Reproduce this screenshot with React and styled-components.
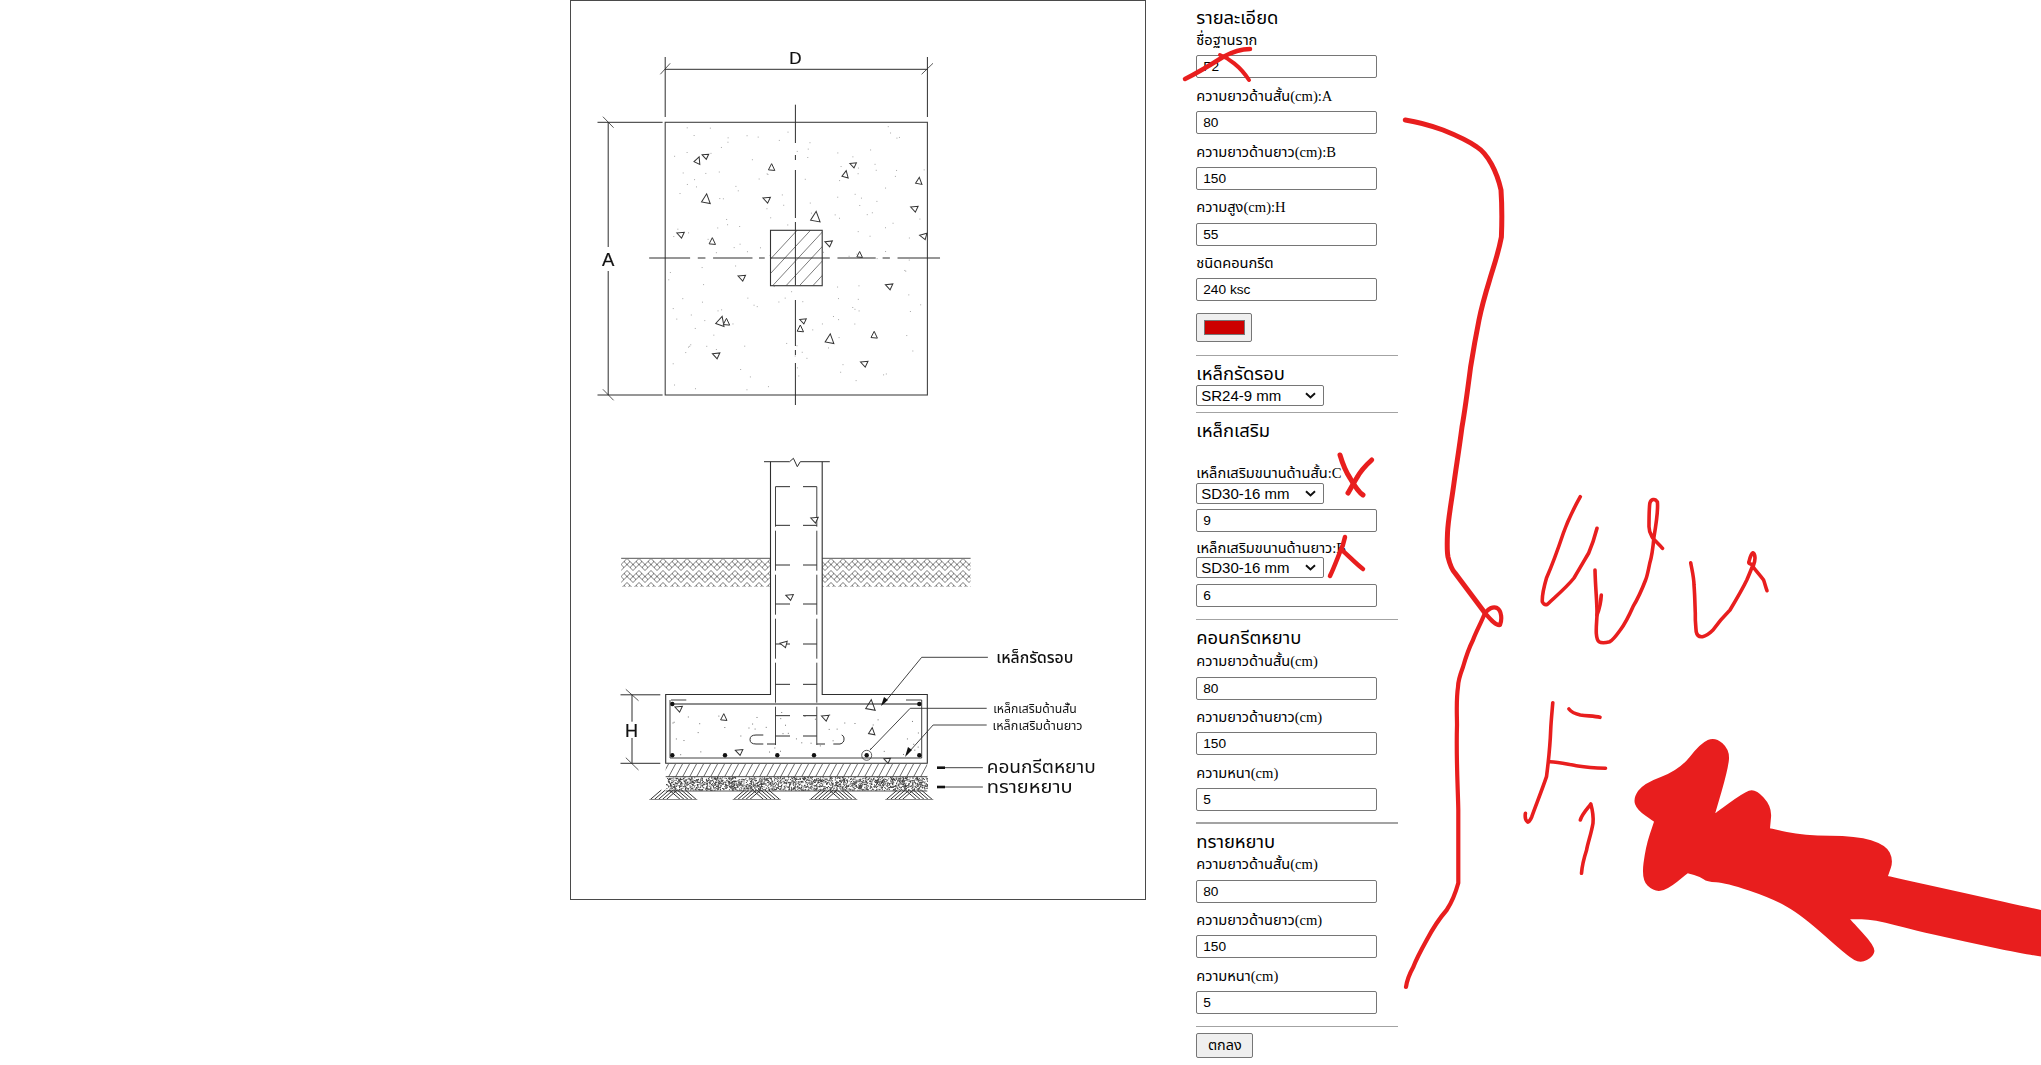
import React from "react";
import styled, { createGlobalStyle } from "styled-components";

const Global = createGlobalStyle`
  html, body { margin: 0; padding: 0; background: #fff; overflow: hidden; }
  #root { width: 2041px; height: 1065px; }
`;

const Page = styled.div`
  position: relative;
  display: flex;
  align-items: flex-start;
  width: 2041px;
  height: 1065px;
  padding-left: 570px;
  box-sizing: border-box;
  overflow: hidden;
`;

const Figure = styled.div`
  flex: none;
  box-sizing: border-box;
  width: 576px;
  height: 900px;
  border: 1px solid #4a4a4a;
`;

const FigureArt = styled.svg`
  display: block;
  width: 574px;
  height: 898px;
  filter: blur(0.25px);
`;

const FormColumn = styled.form`
  flex: none;
  display: flex;
  flex-direction: column;
  align-items: flex-start;
  width: 202px;
  margin-left: 50.25px;
  padding-top: 7px;
  color: #000;
  font-family: "Liberation Serif", "Noto Sans Thai", "Noto Sans", serif;
`;

const Heading = styled.h3`
  margin: 0 0 ${(p) => p.$after ?? 1.5}px;
  height: 22px;
  line-height: 22px;
  font-size: 18.4px;
  font-weight: 400;
  font-family: "Liberation Sans", "Noto Sans Thai", "Noto Sans", sans-serif;
  white-space: nowrap;
`;

const Label = styled.label`
  display: block;
  height: 20px;
  line-height: 20px;
  font-size: 14.6px;
  white-space: nowrap;
`;

const TextInput = styled.input`
  display: block;
  box-sizing: border-box;
  width: 181px;
  height: 23px;
  margin: ${(p) => p.$top ?? 5.25}px 0 ${(p) => p.$bottom ?? 7.5}px;
  padding: 0 6px;
  border: 1px solid #767676;
  border-radius: 2px;
  background: #fff;
  color: #000;
  font-family: "Liberation Sans", sans-serif;
  font-size: 13.7px;
`;

const chevron = encodeURIComponent(
  '<svg xmlns="http://www.w3.org/2000/svg" width="11" height="7" viewBox="0 0 11 7"><path d="M1 1.2 L5.5 5.4 L10 1.2" fill="none" stroke="#111" stroke-width="2"/></svg>'
);

const Dropdown = styled.select`
  display: block;
  appearance: none;
  box-sizing: border-box;
  width: 128px;
  height: 20.5px;
  margin: ${(p) => p.$top ?? 0}px 0 0;
  padding: 0 0 0 4px;
  border: 1px solid #767676;
  border-radius: 2px;
  background: #fff url("data:image/svg+xml,${chevron}") no-repeat right 7px center;
  color: #000;
  font-family: "Liberation Sans", sans-serif;
  font-size: 15px;
`;

const SwatchButton = styled.button`
  display: flex;
  align-items: center;
  justify-content: center;
  box-sizing: border-box;
  width: 56px;
  height: 29.5px;
  margin-top: 4px;
  padding: 0;
  border: 1px solid #767676;
  border-radius: 2px;
  background: #efefef;
`;

const Swatch = styled.span`
  display: block;
  box-sizing: border-box;
  width: 41px;
  height: 14.5px;
  border: 1px solid #777;
  background: #cc0000;
`;

const Rule = styled.hr`
  align-self: stretch;
  height: 1.5px;
  margin: ${(p) => p.$top}px 0 ${(p) => p.$bottom ?? 7}px;
  border: 0;
  background: #a3a3a3;
`;

const SubmitButton = styled.button`
  box-sizing: border-box;
  width: 57px;
  height: 25px;
  padding: 0;
  border: 1px solid #767676;
  border-radius: 2px;
  background: #efefef;
  color: #000;
  font-family: "Liberation Sans", "Noto Sans Thai", "Noto Sans", sans-serif;
  font-size: 14.4px;
`;

const Overlay = styled.svg`
  position: absolute;
  left: 0;
  top: 0;
  width: 2041px;
  height: 1065px;
  pointer-events: none;
`;

const INK = "#2e2e2e";
const px = (x) => 560 + x / 2.613;
const py1 = (y) => y / 3;
const py2 = (y) => 440 + y / 3;

const seeded = (seed) => {
  let s = seed;
  return () => {
    s = (s * 16807) % 2147483647;
    return s / 2147483647;
  };
};

const Line = ({ pts, w = 1, c = INK, dash }) => (
  <polyline points={pts.map((p) => p.join(",")).join(" ")} fill="none" stroke={c} strokeWidth={w} strokeDasharray={dash} />
);

const Tri = ({ x, y, s = 4.5, r = 0 }) => (
  <polygon
    points={`0,${-s} ${s * 0.8},${s * 0.7} ${-s * 0.8},${s * 0.55}`}
    transform={`translate(${x} ${y}) rotate(${r})`}
    fill="#fff"
    stroke="#333"
    strokeWidth="1"
  />
);

const planTris = [
  [360, 482, 4, 20], [380, 468, 3.5, -70], [553, 503, 4, 0], [766, 494, 3.5, -70], [746, 524, 4, 10],
  [938, 544, 4, 5], [382, 598, 5.5, 5], [540, 598, 4, -70], [926, 625, 4, -70], [668, 652, 6, 5],
  [315, 703, 4, -70], [398, 725, 4, 0], [702, 729, 4, -70], [950, 708, 4, -80], [783, 765, 3.5, 0],
  [475, 832, 4, -70], [860, 858, 4, -70], [420, 965, 5.5, 15], [435, 967, 4, 0], [635, 962, 3.5, -70],
  [628, 987, 4, 0], [705, 1018, 5.5, 5], [821, 1006, 4, 0], [408, 1065, 4, -70], [795, 1090, 4, -70],
];

const elevTris = [
  [665, 238, 4, -70], [600, 470, 4, -70], [585, 612, 4, -80], [812, 797, 6, 5], [310, 805, 4, -70],
  [428, 833, 4, 0], [693, 832, 4, -70], [815, 875, 4, 5], [468, 935, 4, -70], [855, 960, 3.5, -70],
];

const randPlan = seeded(7771);
const planDots = Array.from({ length: 170 }, () => [667 + randPlan() * 258, 124 + randPlan() * 269]);
const randFoot = seeded(4242);
const footDots = Array.from({ length: 50 }, () => [672 + randFoot() * 246, 707 + randFoot() * 48]);
const randSand = seeded(9119);
const sandDots = Array.from({ length: 2000 }, () => [666 + randSand() * 261, 777 + randSand() * 13]);

const segs = (list, f) => list.map(([a, b]) => f(a, b));

const PlanView = () => (
  <g>
    <rect x="665.2" y="122.3" width="262.2" height="272.7" fill="none" stroke="#444" strokeWidth="1.1" />
    {planDots.map(([x, y], i) => <rect key={i} x={x} y={y} width="1" height="1" fill="#a8a8a8" />)}
    {planTris.map(([x, y, s, r], i) => <Tri key={i} x={px(x)} y={py1(y)} s={s} r={r} />)}
    <Line pts={[[665.2, 69.3], [927.4, 69.3]]} />
    <Line pts={[[665.2, 57], [665.2, 117]]} />
    <Line pts={[[927.4, 57], [927.4, 117]]} />
    <Line pts={[[660.3, 74.3], [670.2, 63.3]]} w={0.8} />
    <Line pts={[[921.6, 74.3], [933, 63.3]]} w={0.8} />
    <text x="795.4" y="64" textAnchor="middle" fontFamily="Liberation Sans" fontSize="17" fill="#111" stroke="#111" strokeWidth="0.2">D</text>
    <Line pts={[[597.5, 122.3], [662.6, 122.3]]} />
    <Line pts={[[597.5, 395], [662.6, 395]]} />
    <Line pts={[[608.2, 122.3], [608.2, 247]]} />
    <Line pts={[[608.2, 271], [608.2, 395]]} />
    <Line pts={[[602.9, 116.7], [613.6, 127.7]]} w={0.8} />
    <Line pts={[[602.9, 389.3], [613.6, 400.3]]} w={0.8} />
    <text x="608.2" y="266" textAnchor="middle" fontFamily="Liberation Sans" fontSize="18.5" fill="#111" stroke="#111" strokeWidth="0.2">A</text>
    <rect x="770.5" y="230.3" width="51.7" height="55.4" fill="#fff" stroke="#333" strokeWidth="1.1" />
    <clipPath id="col-clip"><rect x="770.5" y="230.3" width="51.7" height="55.4" /></clipPath>
    <g clipPath="url(#col-clip)">
      {Array.from({ length: 10 }, (_, i) => (
        <line key={i} x1={740 + i * 13.4} y1="292" x2={740 + i * 13.4 + 62} y2="225" stroke="#444" strokeWidth="0.7" />
      ))}
    </g>
    {segs([[104.7, 143], [155, 160], [170, 218], [222, 285], [300, 346], [350, 355], [363, 405]], (a, b) => (
      <Line key={a} pts={[[795.4, a], [795.4, b]]} />
    ))}
    {segs([[233, 340], [360, 380], [400, 503], [520, 535], [550, 705], [725, 825], [843, 862], [882, 993]], (a, b) => (
      <Line key={a} pts={[[px(a), 258], [px(b), 258]]} />
    ))}
  </g>
);

const ties = [140, 256, 375, 492, 612, 733, 827, 888];

const earthCenters = [673.3, 756.7, 833.3, 909.3];

const Leader = ({ pts, w = 0.9 }) => <Line pts={pts} w={w} />;

const CalloutText = ({ x, y, len, size, weight, children }) => (
  <text
    x={x}
    y={y}
    textLength={len}
    lengthAdjust="spacingAndGlyphs"
    fontFamily="Liberation Sans, Noto Sans Thai, Noto Sans, sans-serif"
    fontSize={size}
    fontWeight={weight}
    fill="#111"
  >
    {children}
  </text>
);

const ElevationView = () => (
  <g>
    <defs>
      <pattern id="soil" width="12" height="12" patternUnits="userSpaceOnUse" x="621" y="558.5">
        <path d="M0 6 L6 0 L12 6 M0 12 L6 6 L12 12 M3 3 L6 6 M9 3 L6 6 M3 9 L0 6 M9 9 L12 6" fill="none" stroke="#5a5a5a" strokeWidth="0.8" />
      </pattern>
      <pattern id="lean" width="7" height="13" patternUnits="userSpaceOnUse" x="665" y="764">
        <path d="M-3.5 13 L3.5 0 M3.5 13 L10.5 0" fill="none" stroke="#444" strokeWidth="0.8" />
      </pattern>
    </defs>
    <rect x="621.2" y="558.3" width="149.3" height="28.6" fill="url(#soil)" />
    <rect x="822.2" y="558.3" width="148.4" height="28.6" fill="url(#soil)" />
    <Line pts={[[621.2, 558.3], [770.5, 558.3]]} w={1.2} c="#777" />
    <Line pts={[[822.2, 558.3], [970.6, 558.3]]} w={1.2} c="#777" />

    <Line pts={[[764, 461.7], [789.6, 461.7], [793.4, 458.3], [797.3, 466.7], [800.3, 461.7], [829.8, 461.7]]} />
    <Line pts={[[770.5, 461.7], [770.5, 694.5], [665.7, 694.5], [665.7, 763.3], [927.3, 763.3], [927.3, 694.5], [822.2, 694.5], [822.2, 461.7]]} w={1.1} />
    <Line pts={[[775.5, 486.7], [775.5, 745]]} dash="40 4" w={0.9} />
    <Line pts={[[816.8, 486.7], [816.8, 745]]} dash="40 4" w={0.9} />
    {ties.map((y) => (
      <g key={y}>
        <Line pts={[[775.5, py2(y)], [790, py2(y)]]} />
        <Line pts={[[803, py2(y)], [816.8, py2(y)]]} />
      </g>
    ))}
    {footDots.map(([x, y], i) => <rect key={i} x={x} y={y} width="1" height="1" fill="#777" />)}
    {elevTris.map(([x, y, s, r], i) => <Tri key={i} x={px(x)} y={py2(y)} s={s} r={r} />)}

    <Line pts={[[672, 704], [919.5, 704]]} w={1.2} c="#1d1d1d" />
    <Line pts={[[670, 700], [670, 758], [921.7, 758], [921.7, 700], [906, 700]]} w={0.9} />
    <Line pts={[[671, 700], [686.3, 700]]} w={0.9} />
    {[[672.3, 704], [919.3, 704], [672.3, 755.3], [725, 755.3], [777.3, 755.3], [814, 755.3], [866.7, 755.3], [919.3, 755.3]].map(([x, y]) => (
      <circle key={x + y} cx={x} cy={y} r="2.2" fill="#111" />
    ))}
    <circle cx="866.7" cy="755.3" r="5" fill="none" stroke="#333" strokeWidth="0.8" />
    <path d="M763.3 735 L756 735 Q750 735 750 739.5 Q750 744 756 744 L763.3 744 M767 744 L775.5 744" fill="none" stroke={INK} />
    <path d="M816.8 744 L825 744 M833.3 744 L840 744 Q844.5 743 844 738 Q844 736 841.7 735" fill="none" stroke={INK} />

    <rect x="665.7" y="764" width="261.6" height="12.7" fill="url(#lean)" />
    <Line pts={[[665.7, 776.7], [927.3, 776.7]]} w={0.9} />
    {sandDots.map(([x, y], i) => <rect key={i} x={x} y={y} width="1" height="1" fill="#3c3c3c" />)}
    <Line pts={[[665.7, 791], [927.3, 791]]} w={1} c="#555" />
    {earthCenters.map((cx) => (
      <g key={cx} stroke="#333" strokeWidth="1">
        {[-23, -19, -15, -11, -7].map((d) => <line key={d} x1={cx + d} y1="799.5" x2={cx + d + 11} y2="790" />)}
        {[23, 19, 15, 11, 7].map((d) => <line key={d} x1={cx + d} y1="799.5" x2={cx + d - 11} y2="790" />)}
        <line x1={cx - 24} y1="799.5" x2={cx + 24} y2="799.5" stroke="#888" />
      </g>
    ))}

    <Line pts={[[620.5, 694.8], [660.3, 694.8]]} />
    <Line pts={[[620.5, 763.3], [660.3, 763.3]]} />
    <Line pts={[[632, 695], [632, 721.7]]} />
    <Line pts={[[632, 738], [632, 763.3]]} />
    <Line pts={[[625.8, 689.3], [638.5, 700.7]]} w={0.8} />
    <Line pts={[[625.8, 757.7], [638.5, 770]]} w={0.8} />
    <text x="631.4" y="736.5" textAnchor="middle" fontFamily="Liberation Sans" fontSize="18" fill="#111" stroke="#111" strokeWidth="0.2">H</text>

    <Leader pts={[[987.9, 657.3], [921.7, 657.3], [883.4, 704]]} />
    <polygon points="881,706 884,697 888,700" fill="#111" />
    <Leader pts={[[986.7, 708.3], [910.2, 708.3], [870, 750]]} />
    <Leader pts={[[986.7, 725], [933.1, 725], [906.3, 755]]} />
    <polygon points="905,757 908,747 912,750" fill="#111" />
    <Leader pts={[[982.9, 767.7], [937, 767.7]]} />
    <rect x="937" y="766.4" width="8" height="2.6" fill="#111" />
    <Leader pts={[[982.9, 787], [937, 787]]} />
    <rect x="937" y="785.7" width="8" height="2.6" fill="#111" />

    <CalloutText x={996.3} y={663} len={77} size={15} weight={500}>เหล็กรัดรอบ</CalloutText>
    <CalloutText x={993.2} y={713} len={83.5} size={11.5}>เหล็กเสริมด้านสั้น</CalloutText>
    <CalloutText x={992.5} y={729.5} len={90} size={11.5}>เหล็กเสริมด้านยาว</CalloutText>
    <CalloutText x={986.7} y={773} len={109} size={18}>คอนกรีตหยาบ</CalloutText>
    <CalloutText x={986.7} y={792.5} len={86} size={18}>ทรายหยาบ</CalloutText>
  </g>
);

const RED = "#e81e1e";

const Stroke = ({ d, w = 3.6 }) => (
  <path d={d} fill="none" stroke={RED} strokeWidth={w} strokeLinecap="round" strokeLinejoin="round" />
);

/* Outline of the filled blob, traced around the reference as (x, y) in a 2.372x / 3x crop */
const blobOutline = [
  [795, 470], [830, 510], [825, 570], [795, 700], [795, 700], [860, 640], [890, 625], [930, 680], [925, 745], [925, 745],
  [1005, 767], [1130, 767], [1200, 795], [1218, 840], [1205, 888], [1205, 888], [1390, 940], [1568, 990], [1640, 1010],
  [1640, 1140], [1568, 1130], [1500, 1115], [1280, 1055], [1170, 1018], [1115, 1018], [1115, 1018], [1175, 1100], [1170, 1130],
  [1140, 1150], [1110, 1130], [1000, 1005], [930, 955], [820, 908], [775, 905], [760, 890], [730, 880], [730, 880], [680, 930],
  [650, 935], [620, 900], [630, 800], [650, 725], [650, 725], [610, 690], [600, 655], [625, 610], [710, 570], [760, 490],
].map(([x, y]) => [1380 + x / 2.372, 580 + y / 3]);

const smoothClosed = (pts) => {
  const mid = (a, b) => [(a[0] + b[0]) / 2, (a[1] + b[1]) / 2];
  const start = mid(pts[pts.length - 1], pts[0]);
  let d = `M${start[0].toFixed(1)} ${start[1].toFixed(1)}`;
  pts.forEach((p, i) => {
    const m = mid(p, pts[(i + 1) % pts.length]);
    d += ` Q${p[0].toFixed(1)} ${p[1].toFixed(1)} ${m[0].toFixed(1)} ${m[1].toFixed(1)}`;
  });
  return `${d} Z`;
};

const Scribbles = () => (
  <Overlay viewBox="0 0 2041 1065">
    <Stroke w={4.5} d="M1185 79 C1195 74 1212 64 1223 57 C1232 52 1242 49 1250 49" />
    <Stroke w={4} d="M1220 55 C1228 58 1240 66 1249 80" />
    <Stroke w={5} d="M1405.3 120 C1418 122 1432 126 1443 130 C1458 136 1470 142 1477 147 C1488 154 1497 172 1501 190 C1502 205 1502 222 1501.4 237 C1498 255 1493 268 1489.6 280 C1485 295 1482 305 1479 320 C1475 340 1473 352 1470.6 367 C1467 395 1465 410 1462 427 C1459 450 1456 468 1454 483 C1451 505 1448 520 1447.5 533 C1447 545 1447 552 1448 557 C1450 565 1452 570 1455 573 L1485 613" />
    <Stroke w={4.2} d="M1485 613 C1488 609 1493 606 1497 608 C1502 611 1502 620 1500 625 C1496 626 1491 620 1485 613 C1480 625 1476 632 1473 640 C1468 650 1465 660 1463 667 C1460 675 1458 682 1458 687 C1456 700 1457 715 1457 725 C1456 760 1458 790 1458.3 810 L1458.3 883 C1455 895 1450 905 1446.7 910 C1438 920 1432 930 1426.7 940 C1420 952 1416 960 1413.3 967 C1410 973 1407 980 1406 987" />
    <Stroke w={5} d="M1340 455 C1343 465 1348 475 1350 478 C1354 485 1358 492 1363 495" />
    <Stroke w={5} d="M1371.7 460 C1365 466 1360 472 1356.7 478 C1353 484 1350 490 1348 493" />
    <Stroke w={4.5} d="M1345 537 C1344 542 1343 546 1340 552 C1336 562 1333 570 1330 576" />
    <Stroke w={4.5} d="M1341.7 550 C1348 555 1356 564 1363 569" />

    <Stroke d="M1580.3 496.7 C1574 508 1568 520 1563.4 533 C1557 552 1550 570 1546.5 578 C1543 590 1542 596 1542.3 601.7 C1544 605 1546 605 1547.4 604.3 C1555 597 1566 588 1574 578 C1580 568 1584 561 1588.7 553 C1593 543 1595 536 1597 528.3" />
    <Stroke d="M1662.5 548.3 C1658 543 1654 540 1652 536.7 C1649 532 1649 528 1649 526.7 C1649 518 1649 510 1649.8 503.3 C1651 499 1655 498 1657.4 502 C1658 508 1656 525 1654 536.7 C1653 548 1652 556 1649.8 563 C1648 572 1647 577 1645.6 580 C1641 592 1637 600 1633 606.7 C1628 618 1624 625 1620.3 630 C1616 636 1613 640 1609.8 641.7 C1605 643 1601 643 1599 641.7 C1597 640 1596.5 636 1596.3 633.3 C1596 625 1597 620 1597 613.3 C1597 600 1595.5 590 1595 570" />
    <Stroke d="M1601.3 595 C1601 602 1599 610 1597 615" />
    <Stroke d="M1690.7 562.7 C1692 570 1694 578 1694 585 C1695 598 1695 608 1695.3 613 C1695 622 1696 628 1696.2 631.7 C1697 636 1700 637 1702.5 636.7 C1706 636 1710 633 1713 630 C1718 623 1724 616 1730 610 C1736 600 1742 590 1746.8 580 C1749 575 1751 570 1753 565 C1750 564 1748 563 1749 561.7 C1750 557 1752 553 1753 552.7 C1755 554 1755 558 1755 558 C1755 562 1754 564 1753 566.7 C1756 571 1760 575 1763.6 580 C1765 584 1766 588 1767 590.7" />
    <Stroke d="M1552.8 702.7 C1552 712 1551 722 1550.7 730 C1550 748 1548 765 1546.5 776.7 C1542 790 1536 805 1531.8 816.7 C1530 821 1528 823 1527.5 821.7 C1525 820 1525 816 1525.4 813.3" />
    <Stroke d="M1550 761.7 C1560 762 1570 765 1578 766 C1588 767.5 1598 768 1605.5 768.3" />
    <Stroke d="M1568.9 709 C1572 713 1576 714 1580.3 715 C1588 716 1595 716 1600 717.3" />
    <Stroke d="M1580.3 820 C1582 814 1588 808 1590.8 804 C1593 812 1593.5 818 1593 823.3 C1591 835 1588 842 1586.6 850 C1584 858 1582 866 1581.5 873.3" />

    <path d={smoothClosed(blobOutline)} fill={RED} />
  </Overlay>
);

const fieldRows = (rows, after) =>
  rows.map(([label, value], i) => (
    <React.Fragment key={label}>
      <Label>{label}</Label>
      <TextInput readOnly value={value} $bottom={i === rows.length - 1 ? after : 7.5} />
    </React.Fragment>
  ));

export default function App() {
  return (
    <Page>
      <Global />
      <Figure>
        <FigureArt viewBox="571 1 574 898">
          <PlanView />
          <ElevationView />
        </FigureArt>
      </Figure>
      <FormColumn onSubmit={(e) => e.preventDefault()}>
        <Heading $after={1}>รายละเอียด</Heading>
        {fieldRows(
          [
            ["ชื่อฐานราก", "F2"],
            ["ความยาวด้านสั้น(cm):A", "80"],
            ["ความยาวด้านยาว(cm):B", "150"],
            ["ความสูง(cm):H", "55"],
            ["ชนิดคอนกรีต", "240 ksc"],
          ],
          7.5
        )}
        <SwatchButton type="button" aria-label="สี"><Swatch /></SwatchButton>
        <Rule $top={12.5} />
        <Heading $after={0}>เหล็กรัดรอบ</Heading>
        <Dropdown defaultValue="SR24-9 mm"><option>SR24-9 mm</option></Dropdown>
        <Rule $top={6} $bottom={6.5} />
        <Heading $after={21.5}>เหล็กเสริม</Heading>
        <Label>เหล็กเสริมขนานด้านสั้น:C</Label>
        <Dropdown defaultValue="SD30-16 mm"><option>SD30-16 mm</option></Dropdown>
        <TextInput readOnly value="9" $top={5} $bottom={6} />
        <Label>เหล็กเสริมขนานด้านยาว:B</Label>
        <Dropdown $top={-0.5} defaultValue="SD30-16 mm"><option>SD30-16 mm</option></Dropdown>
        <TextInput readOnly value="6" $top={6} $bottom={0} />
        <Rule $top={12} $bottom={6.5} />
        <Heading $after={2.5}>คอนกรีตหยาบ</Heading>
        {fieldRows(
          [
            ["ความยาวด้านสั้น(cm)", "80"],
            ["ความยาวด้านยาว(cm)", "150"],
            ["ความหนา(cm)", "5"],
          ],
          0
        )}
        <Rule $top={11.25} />
        <Heading>ทรายหยาบ</Heading>
        {fieldRows(
          [
            ["ความยาวด้านสั้น(cm)", "80"],
            ["ความยาวด้านยาว(cm)", "150"],
            ["ความหนา(cm)", "5"],
          ],
          0
        )}
        <Rule $top={11.75} $bottom={6} />
        <SubmitButton type="submit">ตกลง</SubmitButton>
      </FormColumn>
      <Scribbles />
    </Page>
  );
}
